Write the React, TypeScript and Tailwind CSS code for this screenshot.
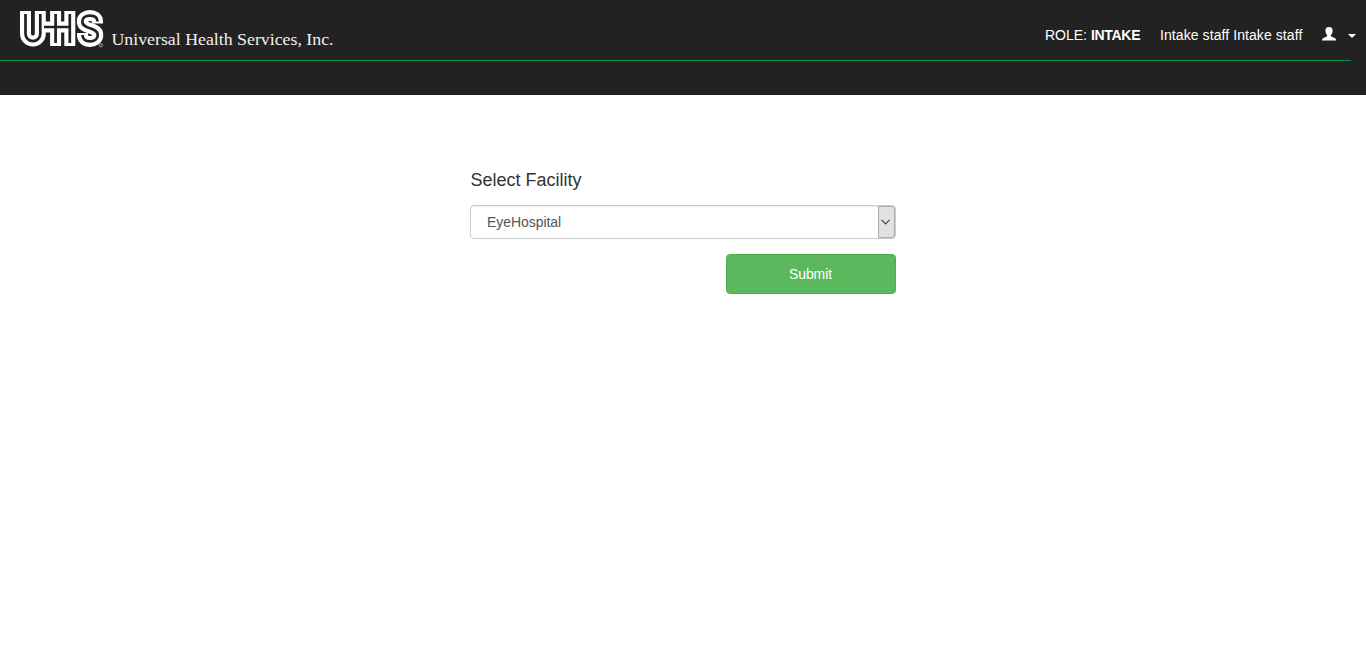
import React from "react";

const S_PATH = "M97.5 22.5V21.5C97.5 17.5 94.5 15.6 90 15.6C85.5 15.6 82.3 17.8 82.3 21.4C82.3 30 97.8 26.5 97.8 35C97.8 39 94.5 41.4 90 41.4C85.5 41.4 82.5 39 82.5 35V34";

function Logo() {
  return (
    <svg className="mt-2 ml-[18px] block h-10 w-[320px]" viewBox="18 8 320 40" role="img" aria-label="UHS">
      <g fill="none" stroke="#fff" strokeWidth="11">
        <path d="M25.5 11V33.7a7.4 7.4 0 0 0 14.8 0V11" />
        <path d="M42 27H70M55.6 11V46M69.8 11V46" />
        <path d={S_PATH} />
      </g>
      <g fill="none" stroke="#222" strokeWidth="2.7">
        <path d="M25.5 14V33.7a7.4 7.4 0 0 0 14.8 0V14" />
        <path d="M44 27H69.8M55.6 14V43M69.8 14V43" />
        <path d={S_PATH} />
      </g>
      <path d="M92 22.5H103M77 34H88" fill="none" stroke="#fff" strokeWidth="2" />
      <circle cx="100.9" cy="45.3" r="1.6" fill="#222" stroke="#ddd" strokeWidth=".7" />
      <text x="111.5" y="45" fill="#f1f1f1" fontSize="17" textLength="222" lengthAdjust="spacingAndGlyphs" className="font-['Palatino_Linotype','Palatino','Liberation_Serif',serif]">Universal Health Services, Inc.</text>
    </svg>
  );
}

export default function App() {
  return (
    <div className="min-h-[659px] bg-white font-['Liberation_Sans',Arial,sans-serif] text-sm leading-5 text-[#333]">
      <header className="h-[95px] bg-[#222] text-white">
        <div className="flex h-[60px] justify-between">
          <Logo />
          <div className="flex h-5 pt-[25px] pr-2.5">
            <span className="mr-5 w-[95px] whitespace-nowrap">ROLE: <b className="tracking-[-0.3px]">INTAKE</b></span>
            <span className="mr-[19px] w-[143px] whitespace-nowrap tracking-[0.08px]">Intake staff Intake staff</span>
            <svg className="mt-0.5 h-[14px] w-[15px]" viewBox="0 0 15 14" fill="#fff"><path d="M7 0C4.3 0 3.2 1.8 3.5 4.2C3.7 6.2 4.5 7.4 5.2 8.2V9.3L1.4 10.9Q0 11.7 0 13.4H14.2Q14.2 11.7 12.7 10.9L8.9 9.3V8.2C9.6 7.4 10.4 6.2 10.6 4.2C10.9 1.8 9.8 0 7 0Z" /></svg>
            <span className="mt-[9px] ml-[11px] h-0 border-x-4 border-t-4 border-x-transparent border-t-white" />
          </div>
        </div>
        <div className="mr-[15px] h-px bg-[#0a9344]" />
      </header>
      <main className="ml-[470px] w-[426px] pt-[75px]">
        <h4 className="pl-[0.4px] text-lg leading-5">Select Facility</h4>
        <button className="mt-[15px] flex h-[34px] w-full rounded border border-[#ccc] text-left text-[#555] shadow-[inset_0_1px_1px_rgba(0,0,0,.075)]">
          <span className="flex-1 pt-1.5 pl-4 tracking-[-0.06px]">EyeHospital</span>
          <span className="flex h-full w-[17px] items-center justify-center rounded-r-[3px] border border-[#ababab] bg-[#e1e1e1]">
            <svg className="mr-0.5 h-[6px] w-[9px]" viewBox="0 0 9 6" fill="none" stroke="#444" strokeWidth="1.2"><path d="M.5 .8L4.5 4.8L8.5 .8" /></svg>
          </span>
        </button>
        <button className="mt-[15px] ml-auto block h-10 w-[170px] rounded border border-[#4cae4c] bg-[#5cb85c] pr-px tracking-[-0.1px] text-white">Submit</button>
      </main>
    </div>
  );
}
